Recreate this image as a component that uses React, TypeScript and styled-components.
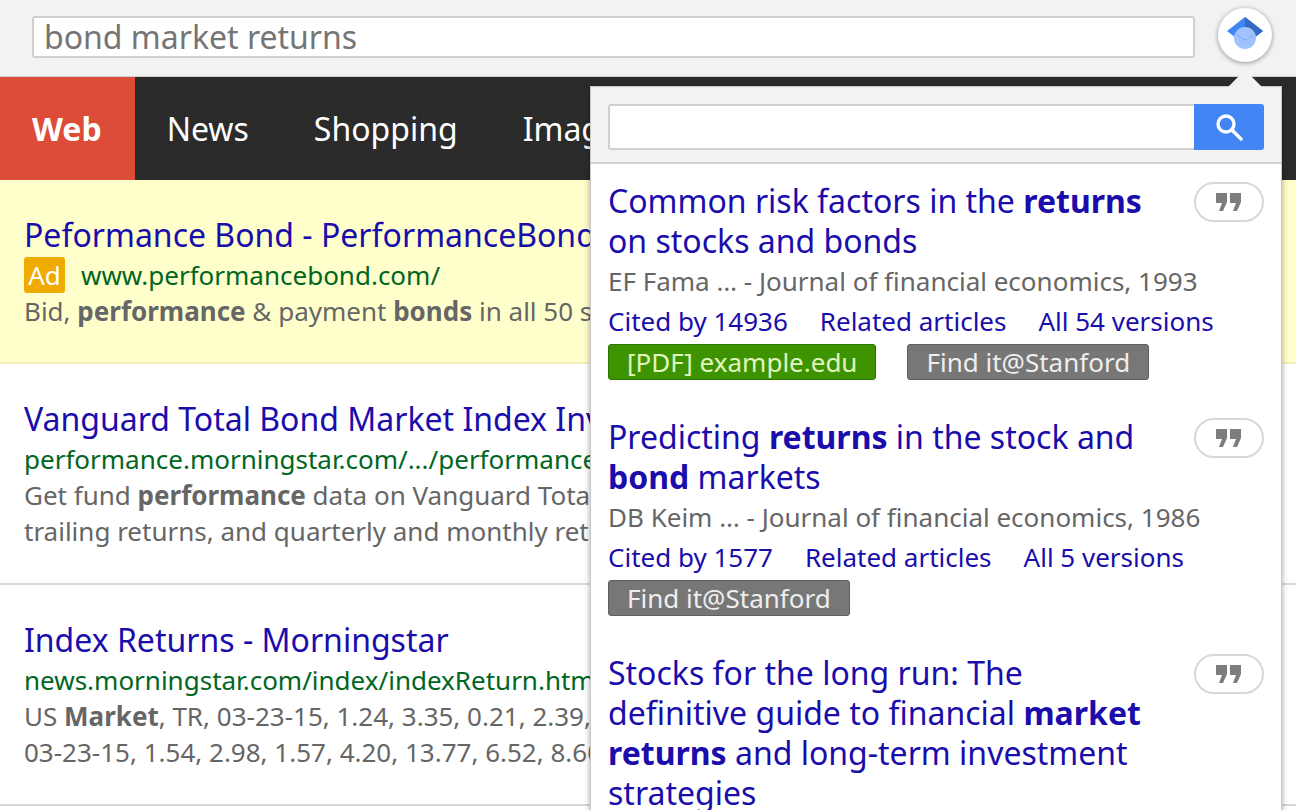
import React from 'react';
import styled, { createGlobalStyle } from 'styled-components';

const GlobalStyle = createGlobalStyle`
  html, body {
    margin: 0;
    height: 100%;
    overflow: hidden;
    background: #fff;
    font-family: 'Noto Sans', 'Open Sans', sans-serif;
  }
`;

type Article = {
  title: React.ReactNode;
  authors: string;
  cited: string;
  versions: string;
  pdf?: string;
};

const articles: Article[] = [
  {
    title: (
      <>
        Common risk factors in the <b>returns</b> on stocks and bonds
      </>
    ),
    authors: 'EF Fama … - Journal of financial economics, 1993',
    cited: 'Cited by 14936',
    versions: 'All 54 versions',
    pdf: '[PDF] example.edu',
  },
  {
    title: (
      <>
        Predicting <b>returns</b> in the stock and <b>bond</b> markets
      </>
    ),
    authors: 'DB Keim … - Journal of financial economics, 1986',
    cited: 'Cited by 1577',
    versions: 'All 5 versions',
  },
  {
    title: (
      <>
        Stocks for the long run: The definitive guide to financial <b>market returns</b> and long-term investment
        strategies
      </>
    ),
    authors: '',
    cited: '',
    versions: '',
  },
];

const QuoteIcon = () => (
  <svg width="26" height="20" viewBox="0 0 26 20">
    <path d="M0 1h11v9l-4 9H3l3-8H0zM14 1h11v9l-4 9h-4l3-8h-6z" fill="#7d7d7d" />
  </svg>
);

const ScholarLogo = () => (
  <svg width="36" height="36" viewBox="0 0 36 36">
    <path d="M18 0L36 14 18 28 0 14z" fill="#4285f4" />
    <path d="M18 0L36 14 18 28z" fill="#356ac3" />
    <circle cx="18" cy="21" r="11" fill="#a0c3ff" />
    <path d="M8.2 16a11 11 0 0 0 19.6 0L18 24z" fill="#76a7fa" />
  </svg>
);

const SearchIcon = () => (
  <svg width="28" height="28" viewBox="0 0 28 28" fill="none" stroke="#fff" strokeWidth="3.4" strokeLinecap="round">
    <circle cx="11" cy="11" r="8" />
    <path d="M17 17l9 9" />
  </svg>
);

export default function App() {
  return (
    <Page>
      <GlobalStyle />
      <Toolbar>
        <AddressBar>bond market returns</AddressBar>
        <ExtensionButton>
          <ScholarLogo />
        </ExtensionButton>
      </Toolbar>
      <Nav>
        <NavItem $active>Web</NavItem>
        <NavItem>News</NavItem>
        <NavItem>Shopping</NavItem>
        <NavItem>Images</NavItem>
      </Nav>
      <Result $ad>
        <ResultTitle>Peformance Bond - PerformanceBond.com</ResultTitle>
        <UrlRow>
          <AdBadge>Ad</AdBadge>
          <ResultUrl>www.performancebond.com/</ResultUrl>
        </UrlRow>
        <Snippet>
          Bid, <b>performance</b> &amp; payment <b>bonds</b> in all 50 states
        </Snippet>
      </Result>
      <Result>
        <ResultTitle>Vanguard Total Bond Market Index Inv</ResultTitle>
        <UrlRow>
          <ResultUrl>performance.morningstar.com/.../performance</ResultUrl>
        </UrlRow>
        <Snippet>
          Get fund <b>performance</b> data on Vanguard Total Bond
          <br />
          trailing returns, and quarterly and monthly returns
        </Snippet>
      </Result>
      <Result>
        <ResultTitle>Index Returns - Morningstar</ResultTitle>
        <UrlRow>
          <ResultUrl>news.morningstar.com/index/indexReturn.html</ResultUrl>
        </UrlRow>
        <Snippet>
          US <b>Market</b>, TR, 03-23-15, 1.24, 3.35, 0.21, 2.39, 12.73
          <br />
          03-23-15, 1.54, 2.98, 1.57, 4.20, 13.77, 6.52, 8.60, 7.45
        </Snippet>
      </Result>

      <Popup>
        <Arrow />
        <PopupHead>
          <PopupInput />
          <PopupSearch>
            <SearchIcon />
          </PopupSearch>
        </PopupHead>
        <PopupBody>
          {articles.map((a, i) => (
            <Entry key={i}>
              <EntryTop>
                <EntryTitle>{a.title}</EntryTitle>
                <QuoteButton>
                  <QuoteIcon />
                </QuoteButton>
              </EntryTop>
              {a.authors && <Authors>{a.authors}</Authors>}
              {a.cited && (
                <Links>
                  <span>{a.cited}</span>
                  <span>Related articles</span>
                  <span>{a.versions}</span>
                </Links>
              )}
              {a.cited && (
                <Tags>
                  {a.pdf && <Tag $pdf>{a.pdf}</Tag>}
                  <Tag>Find it@Stanford</Tag>
                </Tags>
              )}
            </Entry>
          ))}
        </PopupBody>
      </Popup>
    </Page>
  );
}

const Page = styled.div`
  position: relative;
  width: 1296px;
  height: 810px;
  overflow: hidden;
  background: #fff;
`;

const Toolbar = styled.div`
  height: 76px;
  box-sizing: border-box;
  padding: 0 24px 0 32px;
  display: flex;
  align-items: flex-start;
  justify-content: space-between;
  background: #f2f2f2;
  border-bottom: 1px solid #cfcfcf;
  height: 77px;
`;

const AddressBar = styled.div`
  width: 1163px;
  height: 42px;
  margin-top: 16px;
  box-sizing: border-box;
  padding-left: 10px;
  background: #fff;
  border: 2px solid #d0d0d0;
  border-radius: 3px;
  color: #757575;
  font-size: 32px;
  line-height: 38px;
`;

const ExtensionButton = styled.div`
  position: relative;
  z-index: 3;
  width: 54px;
  height: 54px;
  margin-top: 8px;
  border-radius: 50%;
  background: #fff;
  box-shadow: 0 1px 5px rgba(0, 0, 0, 0.4);
  display: flex;
  align-items: center;
  justify-content: center;
`;

const Nav = styled.nav`
  height: 103px;
  display: flex;
  background: #2b2b2b;
`;

const NavItem = styled.div<{ $active?: boolean }>`
  display: flex;
  align-items: center;
  padding: 0 33px 0 ${(p) => (p.$active ? '32px' : '32px')};
  background: ${(p) => (p.$active ? '#dd4b39' : 'transparent')};
  color: #fff;
  font-size: 32px;
  font-weight: ${(p) => (p.$active ? 700 : 400)};
`;

const Result = styled.section<{ $ad?: boolean }>`
  box-sizing: border-box;
  padding: 35px 24px 0;
  background: ${(p) => (p.$ad ? '#ffffcc' : '#fff')};
  border-bottom: 2px solid ${(p) => (p.$ad ? '#f9edbe' : '#d8d8d8')};
  height: ${(p) => (p.$ad ? '184px' : '221px')};
  white-space: nowrap;
`;

const ResultTitle = styled.div`
  color: #1a0dab;
  font-size: 32px;
  line-height: 40px;
`;

const UrlRow = styled.div`
  display: flex;
  align-items: center;
  height: 36px;
  margin-top: 2px;
`;

const AdBadge = styled.span`
  width: 41px;
  height: 36px;
  margin-right: 16px;
  border-radius: 3px;
  background: #f0ab00;
  color: #fff;
  font-size: 26px;
  line-height: 36px;
  text-align: center;
`;

const ResultUrl = styled.span`
  color: #006621;
  font-size: 26px;
`;

const Snippet = styled.div`
  color: #666;
  font-size: 26px;
  line-height: 36px;
`;

const Popup = styled.aside`
  position: absolute;
  z-index: 2;
  left: 590px;
  top: 86px;
  width: 692px;
  height: 760px;
  box-sizing: border-box;
  background: #fff;
  border: 1px solid #c8c8c8;
  box-shadow: 0 2px 6px rgba(0, 0, 0, 0.35);
`;

const Arrow = styled.div`
  position: absolute;
  top: -12px;
  left: 642px;
  width: 24px;
  height: 24px;
  background: #f2f2f2;
  transform: rotate(45deg);
`;

const PopupHead = styled.div`
  position: relative;
  display: flex;
  height: 77px;
  box-sizing: border-box;
  padding: 17px 17px 0;
  background: #f2f2f2;
  border-bottom: 2px solid #d0d0d0;
`;

const PopupInput = styled.div`
  flex: 1;
  height: 46px;
  box-sizing: border-box;
  background: #fff;
  border: 2px solid #d0d0d0;
  border-right: 0;
  border-radius: 3px 0 0 3px;
`;

const PopupSearch = styled.div`
  width: 70px;
  height: 46px;
  display: flex;
  align-items: center;
  justify-content: center;
  border-radius: 0 3px 3px 0;
  background: #4285f4;
`;

const PopupBody = styled.div`
  padding: 17px 17px 0;
`;

const Entry = styled.article`
  margin-bottom: 37px;
`;

const EntryTop = styled.div`
  display: flex;
  justify-content: space-between;
  align-items: flex-start;
`;

const EntryTitle = styled.div`
  width: 560px;
  color: #1a0dab;
  font-size: 32px;
  line-height: 40px;
`;

const QuoteButton = styled.div`
  width: 70px;
  height: 40px;
  margin-top: 1px;
  box-sizing: border-box;
  border: 2px solid #d8d8d8;
  border-radius: 20px;
  display: flex;
  align-items: center;
  justify-content: center;
`;

const Authors = styled.div`
  margin-top: 2px;
  color: #666;
  font-size: 26px;
  line-height: 36px;
  white-space: nowrap;
`;

const Links = styled.div`
  display: flex;
  gap: 32px;
  margin-top: 4px;
  color: #1a0dab;
  font-size: 26px;
  line-height: 36px;
  white-space: nowrap;
`;

const Tags = styled.div`
  display: flex;
  gap: 31px;
  margin-top: 5px;
`;

const Tag = styled.div<{ $pdf?: boolean }>`
  height: 36px;
  box-sizing: border-box;
  padding: 0 18px;
  border-radius: 3px;
  border: 1px solid ${(p) => (p.$pdf ? '#2d7600' : '#616161')};
  background: ${(p) => (p.$pdf ? '#3d9400' : '#777')};
  color: ${(p) => (p.$pdf ? '#e0f5c0' : '#eee')};
  font-size: 26px;
  line-height: 34px;
  white-space: nowrap;
`;
